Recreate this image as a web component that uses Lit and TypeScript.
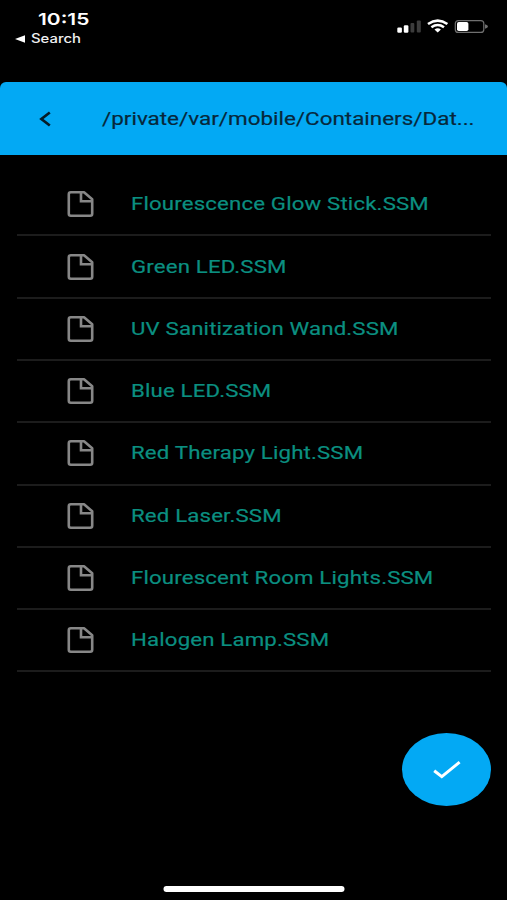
import { LitElement, html, css } from "lit";
import { customElement, property } from "lit/decorators.js";

@customElement("status-bar")
class StatusBar extends LitElement {
  static styles = css`
    :host { display: flex; justify-content: space-between; height: 82px; box-sizing: border-box; padding: 8px 18px 0 15px; color: #fff; font-family: Inter, sans-serif; }
    .left { display: flex; flex-direction: column; }
    .time { margin-left: 23px; font-size: 16.5px; line-height: 22px; font-weight: 600; transform: scaleX(1.27); transform-origin: 0 50%; white-space: nowrap; }
    .back { display: flex; align-items: center; height: 18px; gap: 6px; color: #f0f0f0; }
    .back span { font-size: 12.5px; line-height: 18px; font-weight: 500; transform: scaleX(1.19); transform-origin: 0 50%; }
    svg { display: block; }
    .icons { margin-top: 11px; }
  `;
  render() {
    return html`
      <div class="left">
        <div class="time">10:15</div>
        <div class="back">
          <svg width="10" height="8" viewBox="0 0 10 8"><path d="M0 4 10 .2v7.6z" fill="#fff" /></svg>
          <span>Search</span>
        </div>
      </div>
      <svg class="icons" width="92" height="16" viewBox="0 0 92 16">
        <rect x="0.3" y="8.5" width="4.6" height="5.2" rx="1.2" fill="#fff" />
        <rect x="6.8" y="6.2" width="4.6" height="7.5" rx="1.2" fill="#fff" />
        <rect x="13.5" y="4" width="3.8" height="9.5" rx="1" fill="#3c3c3c" />
        <rect x="19.8" y="1.5" width="4" height="12" rx="1" fill="#3c3c3c" />
        <g fill="none" stroke="#fff" stroke-width="2.6">
          <path d="M31 5Q40.7-1.7 50.4 5" />
          <path d="M34.4 8.2Q40.7 3.8 47 8.2" />
        </g>
        <path d="M37.5 10.6Q40.7 8.1 43.9 10.6L40.7 13.6z" fill="#fff" />
        <rect x="58.3" y="1.6" width="28.5" height="11.8" rx="3" fill="none" stroke="#707070" stroke-width="1.2" />
        <rect x="60" y="3" width="11.4" height="9" rx="1.8" fill="#fff" />
        <path d="M88 5.2Q91 6 91 7.5T88 9.8z" fill="#707070" />
      </svg>
    `;
  }
}

@customElement("path-header")
class PathHeader extends LitElement {
  @property() path = "";
  static styles = css`
    :host { display: flex; align-items: center; height: 72.5px; box-sizing: border-box; padding: 1px 0 0 38px; background: #03a9f4; border-radius: 6px 6px 0 0; color: #07273a; font-family: Roboto, sans-serif; }
    svg { flex: none; margin-right: 50px; }
    .path { padding-top: 1px; font-size: 19px; line-height: 26px; -webkit-text-stroke: 0.2px currentColor; white-space: nowrap; transform: scaleX(1.18); transform-origin: 0 50%; }
  `;
  render() {
    return html`
      <svg width="14" height="16" viewBox="0 0 14 16"><path d="M11.8 1.5 3.4 8l8.4 6.5" fill="none" stroke="#051c28" stroke-width="2.7" /></svg>
      <span class="path">${this.path}</span>
    `;
  }
}

@customElement("file-row")
class FileRow extends LitElement {
  @property() name = "";
  static styles = css`
    :host { display: flex; align-items: center; height: 62.28px; box-sizing: border-box; padding-left: 50px; border-bottom: 2px solid #1c1c1c; color: #0b8f80; font-family: Roboto, sans-serif; }
    svg { flex: none; margin-right: 37px; }
    .name { font-size: 18.5px; line-height: 26px; letter-spacing: 0.14px; -webkit-text-stroke: 0.2px currentColor; white-space: nowrap; transform: scaleX(1.2); transform-origin: 0 50%; }
  `;
  render() {
    return html`
      <svg width="27" height="28" viewBox="0 0 27 28" fill="none" stroke="#878787" stroke-width="2.6" stroke-linejoin="round">
        <path d="M3.8 2.3H17L25.2 9.3V23.8Q25.2 25.7 23.2 25.7H3.8Q1.8 25.7 1.8 23.8V4.2Q1.8 2.3 3.8 2.3z" />
        <path d="M14 2.5V11.3H25" stroke-linejoin="miter" />
      </svg>
      <span class="name">${this.name}</span>
    `;
  }
}

@customElement("app-root")
class AppRoot extends LitElement {
  static styles = css`
    :host { display: flex; flex-direction: column; position: relative; height: 900px; overflow: hidden; background: #000; }
    .list { padding: 19.7px 16px 0 16.5px; }
    .confirm { position: absolute; right: 16px; bottom: 94px; width: 89px; height: 73px; padding: 0; border: 0; border-radius: 50%; background: #03a9f4; display: grid; place-items: center; }
    .home { margin: auto auto 8.5px; width: 181px; height: 6px; border-radius: 3px; background: #fff; transform: translateX(0.5px); }
  `;
  private files = [
    "Flourescence Glow Stick.SSM",
    "Green LED.SSM",
    "UV Sanitization Wand.SSM",
    "Blue LED.SSM",
    "Red Therapy Light.SSM",
    "Red Laser.SSM",
    "Flourescent Room Lights.SSM",
    "Halogen Lamp.SSM",
  ];
  render() {
    return html`
      <status-bar></status-bar>
      <path-header path="/private/var/mobile/Containers/Dat..."></path-header>
      <div class="list">${this.files.map((f) => html`<file-row name=${f}></file-row>`)}</div>
      <button class="confirm" aria-label="Confirm">
        <svg width="28" height="20" viewBox="0 0 28 20"><path d="M1.2 10.7 8.8 16.7 26.6 2.2" fill="none" stroke="#fff" stroke-width="3" /></svg>
      </button>
      <div class="home"></div>
    `;
  }
}
